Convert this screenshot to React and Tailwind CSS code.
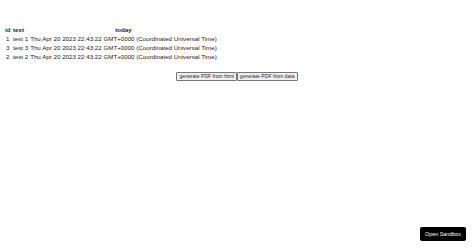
import React from "react";

const rows = [
  { id: 1, text: "test 1" },
  { id: 3, text: "test 3" },
  { id: 2, text: "test 2" },
];

const today = "Thu Apr 20 2023 22:43:22 GMT+0000 (Coordinated Universal Time)";

const App = () => {
  return (
    <div className="min-h-[248px] relative bg-white text-[#222] font-['Liberation_Sans',Arial,sans-serif] text-[6.2px]">
      <div className="pt-[25px] px-[3px]">
        <table className="border-separate border-spacing-[1px]">
          <thead>
            <tr>
              <th className="px-[1px] leading-[8px] font-bold text-[#1f2433]">id</th>
              <th className="px-[0.5px] leading-[8px] font-bold text-left text-[#1f2433]">text</th>
              <th className="px-[0.5px] leading-[8px] font-bold text-[#1f2433]">today</th>
            </tr>
          </thead>
          <tbody>
            {rows.map((r) => (
              <tr key={r.id}>
                <td className="px-[1px] leading-[8px] text-center">{r.id}</td>
                <td className="px-[0.5px] leading-[8px]">{r.text}</td>
                <td className="px-[0.5px] leading-[8px]">{today}</td>
              </tr>
            ))}
          </tbody>
        </table>
        <div className="flex justify-center mt-[10px]">
          <button className="px-[2px] h-[9px] leading-[7px] text-[5.1px] bg-[#efefef] border border-[#767676] rounded-[1px]">
            generate PDF from html
          </button>
          <button className="px-[2px] h-[9px] leading-[7px] text-[5.1px] bg-[#efefef] border border-[#767676] rounded-[1px]">
            generate PDF from data
          </button>
        </div>
      </div>
      <div className="absolute right-[8px] bottom-[7px] bg-black text-white text-[5.4px] leading-[6px] px-[5px] py-[4px] rounded-[2px]">
        Open Sandbox
      </div>
    </div>
  );
};

export default App;
